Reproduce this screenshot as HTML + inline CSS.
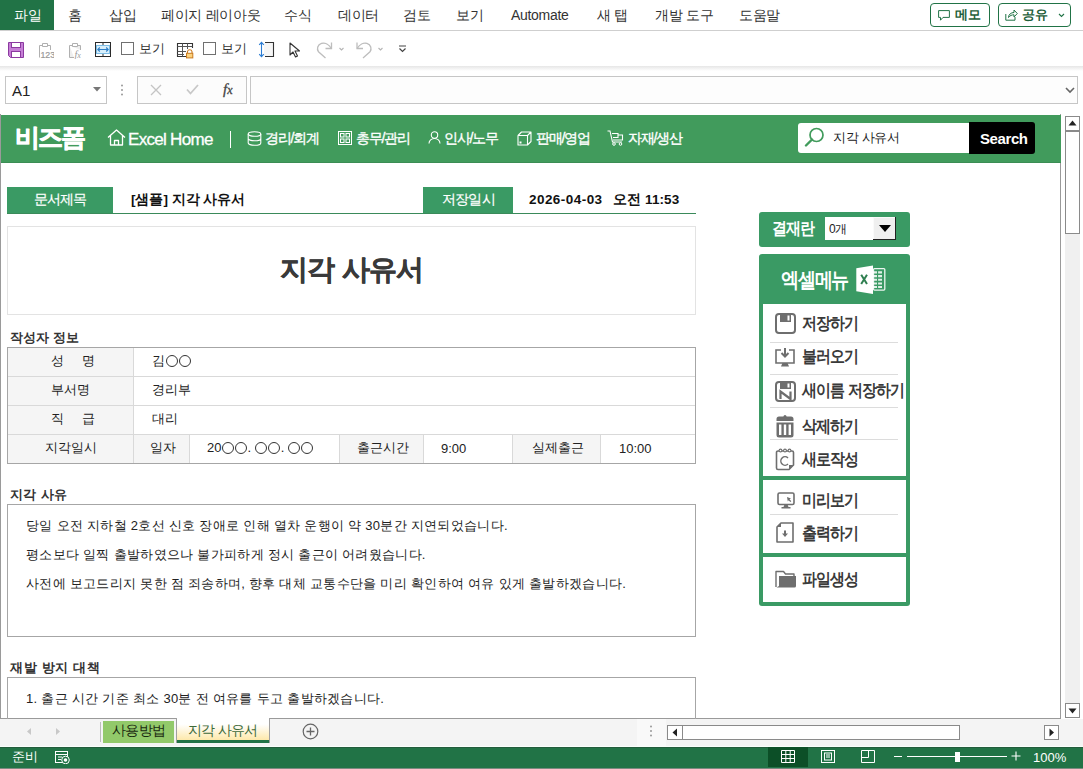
<!DOCTYPE html>
<html><head><meta charset="utf-8">
<style>
*{margin:0;padding:0;box-sizing:border-box}
html,body{width:1083px;height:769px;overflow:hidden;background:#fff;font-family:"Liberation Sans",sans-serif;color:#222}
.a{position:absolute}
.t{position:absolute;white-space:nowrap;line-height:1}
/* menu bar */
#menubar{left:0;top:0;width:1083px;height:31px;background:#fff;border-bottom:1px solid #cfcfcf;box-shadow:0 1px 1px rgba(0,0,0,0.06)}
.mi{position:absolute;top:8px;font-size:14px;color:#333;white-space:nowrap;line-height:14px;letter-spacing:-0.3px}
#filetab{left:0;top:0;width:54px;height:30px;background:#217346}
.btn{position:absolute;top:3px;height:24px;border:1px solid #217346;border-radius:4px;background:#fff}
/* toolbar */
#toolbar{left:0;top:31px;width:1083px;height:36px;background:#fff}
#shadow{left:0;top:66px;width:1083px;height:5px;background:linear-gradient(#e6e6e6,#fff)}
.cb{position:absolute;width:13px;height:13px;border:1px solid #707070;background:#fff}
/* formula */
.box{position:absolute;border:1px solid #c6c6c6;background:#fff}
/* sheet */
#sheet{left:0;top:114px;width:1061px;height:605px;border-left:1px solid #9a9a9a;border-right:1px solid #9a9a9a;border-bottom:1px solid #9a9a9a;background:#fff;overflow:hidden}
.mt{font-size:17px;font-weight:bold;color:#3a3a3a;letter-spacing:-1px;transform:scaleX(0.88);transform-origin:0 0}
.nav{font-size:14px;color:#fff;font-weight:bold;letter-spacing:-0.7px}
.bt{font-size:13px;color:#222;letter-spacing:0.3px}
.c{display:inline-block;width:12px;height:12px;border:1.2px solid #333;border-radius:50%;margin:0 0.5px;vertical-align:-2px}
</style></head><body>

<!-- MENU BAR -->
<div id="menubar" class="a"></div>
<div id="filetab" class="a"></div>
<div class="mi" style="left:14px;color:#fff">파일</div>
<div class="mi" style="left:68px">홈</div>
<div class="mi" style="left:109px">삽입</div>
<div class="mi" style="left:161px">페이지 레이아웃</div>
<div class="mi" style="left:284px">수식</div>
<div class="mi" style="left:338px">데이터</div>
<div class="mi" style="left:403px">검토</div>
<div class="mi" style="left:456px">보기</div>
<div class="mi" style="left:511px">Automate</div>
<div class="mi" style="left:597px">새 탭</div>
<div class="mi" style="left:655px">개발 도구</div>
<div class="mi" style="left:739px">도움말</div>
<div class="btn" style="left:930px;width:60px"></div>
<div class="btn" style="left:998px;width:73px"></div>
<svg class="a" style="left:938px;top:10px" width="12" height="11" viewBox="0 0 12 11"><path d="M0.6 0.6H11.4V7.4H5L2.5 10.2V7.4H0.6Z" fill="none" stroke="#217346" stroke-width="1" stroke-linejoin="round"/></svg>
<div class="t" style="left:955px;top:8px;font-size:13px;font-weight:bold;color:#1f5f3b;letter-spacing:-0.2px">메모</div>
<svg class="a" style="left:1005px;top:9px" width="13" height="12" viewBox="0 0 13 12"><path d="M0.8 5V11.2H10V8" fill="none" stroke="#217346" stroke-width="1"/><path d="M3.5 8.5C3.5 5.5 6 3.5 9 3.5V1L12.3 4.5L9 8V5.8C6.8 5.8 5 6.5 3.5 8.5Z" fill="none" stroke="#217346" stroke-width="1" stroke-linejoin="round"/></svg>
<div class="t" style="left:1022px;top:8px;font-size:13px;font-weight:bold;color:#1f5f3b;letter-spacing:-0.2px">공유</div>
<svg class="a" style="left:1058px;top:13px" width="7" height="5" viewBox="0 0 7 5"><path d="M1 1L3.5 3.5L6 1" fill="none" stroke="#217346" stroke-width="1.1"/></svg>

<!-- TOOLBAR -->
<div id="toolbar" class="a"></div>
<div id="shadow" class="a"></div>
<!-- save icon -->
<svg class="a" style="left:8px;top:42px" width="16" height="16" viewBox="0 0 16 16">
<path d="M0.5 0.5H15.5V15.5H2.5L0.5 13.5Z" fill="#c67fd6" stroke="#8b3aa0" stroke-width="1"/>
<rect x="3.5" y="0.5" width="9" height="5" fill="#fff" stroke="#8b3aa0"/>
<rect x="3.5" y="9.5" width="9" height="6" fill="#fff" stroke="#8b3aa0"/>
</svg>
<!-- paste values icon -->
<svg class="a" style="left:38px;top:42px" width="16" height="17" viewBox="0 0 16 17">
<path d="M4 3.5H1.5V15.5M10 3.5H12.5V8" fill="none" stroke="#b0b0b0" stroke-width="1"/>
<path d="M4.5 4.5V1.5H9.5V4.5Z" fill="#fff" stroke="#b0b0b0" stroke-width="1"/>
<text x="2.4" y="16.3" font-size="8.8" fill="#999" font-family="Liberation Sans" stroke="#999" stroke-width="0.2">123</text>
</svg>
<!-- paste formula icon -->
<svg class="a" style="left:68px;top:42px" width="16" height="17" viewBox="0 0 16 17">
<path d="M1.5 3.5H12.5V8M1.5 3.5V15.5H6" fill="#eee" stroke="#b0b0b0" stroke-width="1"/>
<path d="M4.5 4.5V1.5H9.5V4.5Z" fill="#fff" stroke="#b0b0b0" stroke-width="1"/>
<text x="6.5" y="16" font-size="10" font-style="italic" fill="#999" font-family="Liberation Serif">f<tspan font-size="8">x</tspan></text>
</svg>
<!-- freeze panes -->
<svg class="a" style="left:95px;top:42px" width="16" height="15" viewBox="0 0 16 15">
<rect x="0.5" y="0.5" width="15" height="14" fill="#fff" stroke="#2a2a2a"/>
<line x1="8" y1="0.5" x2="8" y2="3.5" stroke="#2a2a2a"/>
<line x1="8" y1="11.5" x2="8" y2="14.5" stroke="#2a2a2a"/>
<rect x="1.5" y="3.5" width="13" height="8" fill="#d8effb" stroke="#7cbde6"/><rect x="0.5" y="0.5" width="15" height="14" fill="none" stroke="#2a2a2a"/>
<path d="M2.8 7.5H13.2M4.8 5.5L2.8 7.5L4.8 9.5M11.2 5.5L13.2 7.5L11.2 9.5" stroke="#2f7fc8" stroke-width="1.1" fill="none"/>
</svg>
<div class="cb" style="left:121px;top:42px"></div>
<div class="t" style="left:139px;top:42px;font-size:13px;color:#333">보기</div>
<!-- table lock -->
<svg class="a" style="left:176px;top:42px" width="18" height="17" viewBox="0 0 18 17">
<path d="M12 14.5H1.5V1.5H16.5V6" fill="#fff" stroke="#333" stroke-width="1.1"/>
<path d="M1.5 4.5H16.5M1.5 9.5H10M1.5 12.5H8M6.5 1.5V14.5M11.5 1.5V7" stroke="#555" stroke-width="1" fill="none"/>
<path d="M11.5 11V9.5A2.3 2.3 0 0 1 16 9.5V11" fill="none" stroke="#c97a20" stroke-width="1.1"/>
<rect x="10.5" y="11.3" width="6.3" height="4.6" fill="#fcd27c" stroke="#c97a20" stroke-width="1"/>
</svg>
<div class="cb" style="left:203px;top:42px"></div>
<div class="t" style="left:221px;top:42px;font-size:13px;color:#333">보기</div>
<!-- row height -->
<svg class="a" style="left:258px;top:41px" width="17" height="17" viewBox="0 0 17 17">
<rect x="6" y="2" width="9" height="13" fill="#f6f6f6"/>
<path d="M7 1.5H15.5V15.5H7" fill="none" stroke="#333" stroke-width="1.1"/>
<path d="M3.5 1.5V15.5M1.2 3.8L3.5 1.3L5.8 3.8M1.2 13.2L3.5 15.7L5.8 13.2" fill="none" stroke="#2b7cd3" stroke-width="1.1"/>
</svg>
<!-- cursor -->
<svg class="a" style="left:289px;top:42px" width="12" height="16" viewBox="0 0 12 16">
<path d="M1 1V13L4 10L6.5 15L8.5 14L6 9H10.5Z" fill="#fff" stroke="#333" stroke-width="1.1" stroke-linejoin="round"/>
</svg>
<!-- redo -->
<svg class="a" style="left:316px;top:41px" width="30" height="18" viewBox="0 0 30 18">
<path d="M9.5 7.5H15.5V1.5" fill="none" stroke="#bdbdbd" stroke-width="1.3"/>
<path d="M15.3 7.3C13 3.5 9 1.3 5.5 2.3C1.5 3.5 0.5 8 2.5 10.8L9.5 17" fill="none" stroke="#bdbdbd" stroke-width="1.3"/>
<path d="M23.5 7L25.5 9L27.5 7" fill="none" stroke="#b5b5b5" stroke-width="1.1"/>
</svg>
<!-- undo -->
<svg class="a" style="left:355px;top:41px" width="30" height="18" viewBox="0 0 30 18">
<path d="M8 7.5H2V1.5" fill="none" stroke="#bdbdbd" stroke-width="1.3"/>
<path d="M2.2 7.3C4.5 3.5 8.5 1.3 12 2.3C16 3.5 17 8 15 10.8L8 17" fill="none" stroke="#bdbdbd" stroke-width="1.3"/>
<path d="M23.5 7L25.5 9L27.5 7" fill="none" stroke="#b5b5b5" stroke-width="1.1"/>
</svg>
<!-- customize -->
<svg class="a" style="left:398px;top:45px" width="9" height="8" viewBox="0 0 9 8">
<path d="M1 1H8M1.5 3.5L4.5 6.5L7.5 3.5" fill="none" stroke="#444" stroke-width="1.2"/>
</svg>

<!-- FORMULA BAR -->
<div class="box" style="left:5px;top:76px;width:102px;height:28px"></div>
<div class="t" style="left:12px;top:83px;font-size:15px;color:#222">A1</div>
<svg class="a" style="left:93px;top:87px" width="8" height="5" viewBox="0 0 8 5"><path d="M0 0H8L4 4.5Z" fill="#777"/></svg>
<svg class="a" style="left:120px;top:84px" width="4" height="12" viewBox="0 0 4 12"><circle cx="2" cy="1.5" r="1" fill="#999"/><circle cx="2" cy="6" r="1" fill="#999"/><circle cx="2" cy="10.5" r="1" fill="#999"/></svg>
<div class="box" style="left:137px;top:76px;width:110px;height:28px;background:#fcfcfc"></div>
<svg class="a" style="left:150px;top:84px" width="12" height="12" viewBox="0 0 12 12"><path d="M1 1L11 11M11 1L1 11" stroke="#c4c4c4" stroke-width="1.3"/></svg>
<svg class="a" style="left:186px;top:84px" width="13" height="11" viewBox="0 0 13 11"><path d="M1 5.5L4.5 9.5L12 1" fill="none" stroke="#c8c8c8" stroke-width="1.8"/></svg>
<div class="t" style="left:223px;top:82px;font-size:15px;font-family:'Liberation Serif',serif;font-style:italic;color:#444;-webkit-text-stroke:0.3px #444">f<span style="font-size:12px">x</span></div>
<div class="box" style="left:250px;top:76px;width:828px;height:28px;background:#fdfdfd"></div>
<svg class="a" style="left:1065px;top:87px" width="10" height="7" viewBox="0 0 10 7"><path d="M1 1L5 5L9 1" fill="none" stroke="#666" stroke-width="1.6"/></svg>

<!-- SHEET -->
<div id="sheet" class="a"></div>
<!-- header band -->
<div class="a" style="left:1px;top:115px;width:1060px;height:48px;background:#419b5c;border-bottom:1px solid #3b8d54"></div>
<div class="t" style="left:15px;top:125px;font-size:25px;font-weight:bold;color:#fff;letter-spacing:-1.8px;-webkit-text-stroke:0.7px #fff">비즈폼</div>
<svg class="a" style="left:107px;top:129px" width="19" height="17" viewBox="0 0 19 17">
<path d="M1 8.5L9.5 1L18 8.5M3.5 6.5V16H15.5V6.5M7.5 16V11.5H11.5V16" fill="none" stroke="#fff" stroke-width="1.3" stroke-linejoin="round"/>
</svg>
<div class="t" style="left:128px;top:131px;font-size:17px;color:#fff;letter-spacing:-0.7px;-webkit-text-stroke:0.3px #fff">Excel Home</div>
<div class="a" style="left:230px;top:131px;width:1px;height:17px;background:#fff"></div>
<svg class="a" style="left:247px;top:131px" width="15" height="15" viewBox="0 0 15 15">
<ellipse cx="7.5" cy="3" rx="6.3" ry="2.3" fill="none" stroke="#fff" stroke-width="1.1"/>
<path d="M1.2 3V12A6.3 2.3 0 0 0 13.8 12V3M1.2 7.5A6.3 2.3 0 0 0 13.8 7.5" fill="none" stroke="#fff" stroke-width="1.1"/>
</svg>
<div class="t" style="left:265px;top:131px;font-size:14px;color:#fff;font-weight:normal;letter-spacing:-1.2px;-webkit-text-stroke:0.35px #fff">경리/회계</div>
<svg class="a" style="left:338px;top:131px" width="14" height="14" viewBox="0 0 14 14">
<rect x="0.5" y="0.5" width="13" height="13" fill="none" stroke="#fff"/>
<rect x="2.5" y="2.5" width="3.5" height="3.5" fill="none" stroke="#fff"/><rect x="8" y="2.5" width="3.5" height="3.5" fill="none" stroke="#fff"/>
<rect x="2.5" y="8" width="3.5" height="3.5" fill="none" stroke="#fff"/><rect x="8" y="8" width="3.5" height="3.5" fill="none" stroke="#fff"/>
</svg>
<div class="t" style="left:356px;top:131px;font-size:14px;color:#fff;font-weight:normal;letter-spacing:-1.2px;-webkit-text-stroke:0.35px #fff">총무/관리</div>
<svg class="a" style="left:428px;top:131px" width="13" height="13" viewBox="0 0 13 13">
<circle cx="6.5" cy="4" r="3.2" fill="none" stroke="#fff" stroke-width="1.1"/>
<path d="M1 12.5A5.5 5 0 0 1 12 12.5" fill="none" stroke="#fff" stroke-width="1.1"/>
</svg>
<div class="t" style="left:444px;top:131px;font-size:14px;color:#fff;font-weight:normal;letter-spacing:-1.2px;-webkit-text-stroke:0.35px #fff">인사/노무</div>
<svg class="a" style="left:517px;top:131px" width="15" height="15" viewBox="0 0 15 15">
<path d="M1 4.5H10.5V14H1ZM1 4.5L4.5 1H14V10.5L10.5 14M10.5 4.5L14 1" fill="none" stroke="#fff" stroke-width="1.1" stroke-linejoin="round"/>
<rect x="2.5" y="10.5" width="2" height="2" fill="#fff"/>
</svg>
<div class="t" style="left:536px;top:131px;font-size:14px;color:#fff;font-weight:normal;letter-spacing:-1.2px;-webkit-text-stroke:0.35px #fff">판매/영업</div>
<svg class="a" style="left:607px;top:130px" width="17" height="16" viewBox="0 0 17 16">
<path d="M0.5 1H3L5.5 12H15" fill="none" stroke="#fff" stroke-width="1.1"/>
<path d="M5 3.5H11V7.5H6M11 5H15.5V10H6" fill="none" stroke="#fff" stroke-width="1.1"/>
<circle cx="7" cy="14" r="1.3" fill="none" stroke="#fff"/><circle cx="13.5" cy="14" r="1.3" fill="none" stroke="#fff"/>
</svg>
<div class="t" style="left:628px;top:131px;font-size:14px;color:#fff;font-weight:normal;letter-spacing:-1.2px;-webkit-text-stroke:0.35px #fff">자재/생산</div>
<!-- search -->
<div class="a" style="left:798px;top:123px;width:172px;height:30px;background:#fff;border-radius:3px 0 0 3px"></div>
<div class="a" style="left:969px;top:122px;width:66px;height:32px;background:#000;border-radius:0 3px 3px 0"></div>
<svg class="a" style="left:804px;top:127px" width="21" height="20" viewBox="0 0 21 20">
<circle cx="12.5" cy="8" r="6.5" fill="none" stroke="#419b5c" stroke-width="1.7"/>
<path d="M8 12.5L2 18.5" stroke="#419b5c" stroke-width="2.4" stroke-linecap="round"/>
</svg>
<div class="t" style="left:833px;top:131px;font-size:13px;color:#222;letter-spacing:-0.3px">지각 사유서</div>
<div class="t" style="left:980px;top:131px;font-size:15px;font-weight:bold;color:#fff;letter-spacing:-0.4px">Search</div>

<!-- title row -->
<div class="a" style="left:7px;top:187px;width:106px;height:26px;background:#3a9a64"></div>
<div class="t" style="left:34px;top:193px;font-size:13.5px;color:#fff;letter-spacing:-0.9px;-webkit-text-stroke:0.2px #fff">문서제목</div>
<div class="t" style="left:131px;top:193px;font-size:13.5px;font-weight:bold;color:#111">[샘플] 지각 사유서</div>
<div class="a" style="left:423px;top:187px;width:90px;height:26px;background:#3a9a64"></div>
<div class="t" style="left:442px;top:193px;font-size:13.5px;color:#fff;letter-spacing:-0.8px;-webkit-text-stroke:0.2px #fff">저장일시</div>
<div class="t" style="left:529px;top:193px;font-size:13.5px;font-weight:bold;color:#111;letter-spacing:0.45px">2026-04-03</div>
<div class="t" style="left:613px;top:193px;font-size:13.5px;font-weight:bold;color:#111;letter-spacing:0.1px">오전 11:53</div>
<div class="a" style="left:7px;top:213px;width:689px;height:1px;background:#3a8a5a"></div>

<!-- title box -->
<div class="a" style="left:7px;top:226px;width:689px;height:89px;border:1px solid #e3e3e3"></div>
<div class="t" style="left:280px;top:256px;font-size:28px;font-weight:bold;color:#3a3a3a;letter-spacing:-0.7px;-webkit-text-stroke:0.4px #3a3a3a">지각 사유서</div>

<!-- author info -->
<div class="t" style="left:10px;top:331px;font-size:13px;font-weight:bold;color:#333">작성자 정보</div>
<div class="a" style="left:7px;top:347px;width:689px;height:117px;border:1px solid #a6a6a6"></div>
<div class="a" style="left:8px;top:348px;width:126px;height:115px;background:#f5f5f5"></div>
<div class="a" style="left:134px;top:434px;width:56px;height:29px;background:#f5f5f5"></div>
<div class="a" style="left:340px;top:434px;width:84px;height:29px;background:#f5f5f5"></div>
<div class="a" style="left:512px;top:434px;width:89px;height:29px;background:#f5f5f5"></div>
<div class="a" style="left:8px;top:376px;width:687px;height:1px;background:#d9d9d9"></div>
<div class="a" style="left:8px;top:405px;width:687px;height:1px;background:#d9d9d9"></div>
<div class="a" style="left:8px;top:434px;width:687px;height:1px;background:#d9d9d9"></div>
<div class="a" style="left:133px;top:348px;width:1px;height:115px;background:#d9d9d9"></div>
<div class="a" style="left:189px;top:434px;width:1px;height:29px;background:#d9d9d9"></div>
<div class="a" style="left:339px;top:434px;width:1px;height:29px;background:#d9d9d9"></div>
<div class="a" style="left:423px;top:434px;width:1px;height:29px;background:#d9d9d9"></div>
<div class="a" style="left:512px;top:434px;width:1px;height:29px;background:#d9d9d9"></div>
<div class="a" style="left:600px;top:434px;width:1px;height:29px;background:#d9d9d9"></div>
<div class="t" style="left:51px;top:354px;font-size:13px;color:#222">성&nbsp;&nbsp;&nbsp;&nbsp;&nbsp;명</div>
<div class="t" style="left:152px;top:354px;font-size:13px;color:#222">김<i class="c"></i><i class="c"></i></div>
<div class="t" style="left:51px;top:383px;font-size:13px;color:#222">부서명</div>
<div class="t" style="left:152px;top:383px;font-size:13px;color:#222">경리부</div>
<div class="t" style="left:51px;top:412px;font-size:13px;color:#222">직&nbsp;&nbsp;&nbsp;&nbsp;&nbsp;급</div>
<div class="t" style="left:152px;top:412px;font-size:13px;color:#222">대리</div>
<div class="t" style="left:45px;top:441px;font-size:13px;color:#222">지각일시</div>
<div class="t" style="left:150px;top:441px;font-size:13px;color:#222">일자</div>
<div class="t" style="left:207px;top:441px;font-size:13px;color:#222">20<i class="c"></i><i class="c"></i>. <i class="c"></i><i class="c"></i>. <i class="c"></i><i class="c"></i></div>
<div class="t" style="left:357px;top:441px;font-size:13px;color:#222">출근시간</div>
<div class="t" style="left:441px;top:442px;font-size:13px;color:#222">9:00</div>
<div class="t" style="left:532px;top:441px;font-size:13px;color:#222">실제출근</div>
<div class="t" style="left:619px;top:442px;font-size:13px;color:#222">10:00</div>

<!-- reason -->
<div class="t" style="left:10px;top:488px;font-size:13px;font-weight:bold;color:#333;letter-spacing:0.3px">지각 사유</div>
<div class="a" style="left:7px;top:504px;width:689px;height:133px;border:1px solid #a6a6a6"></div>
<div class="t" style="left:26px;top:519px;font-size:13px;color:#222;letter-spacing:0.3px">당일 오전 지하철 2호선 신호 장애로 인해 열차 운행이 약 30분간 지연되었습니다.</div>
<div class="t" style="left:26px;top:548px;font-size:13px;color:#222;letter-spacing:0.3px">평소보다 일찍 출발하였으나 불가피하게 정시 출근이 어려웠습니다.</div>
<div class="t" style="left:26px;top:577px;font-size:13px;color:#222;letter-spacing:0.3px">사전에 보고드리지 못한 점 죄송하며, 향후 대체 교통수단을 미리 확인하여 여유 있게 출발하겠습니다.</div>

<!-- prevention -->
<div class="t" style="left:10px;top:661px;font-size:13px;font-weight:bold;color:#333;letter-spacing:0.7px">재발 방지 대책</div>
<div class="a" style="left:7px;top:677px;width:689px;height:60px;border:1px solid #a6a6a6"></div>
<div class="t" style="left:26px;top:692px;font-size:13px;color:#222;letter-spacing:0.3px">1. 출근 시간 기준 최소 30분 전 여유를 두고 출발하겠습니다.</div>

<!-- approval -->
<div class="a" style="left:759px;top:212px;width:151px;height:35px;background:#3a9a64;border-radius:3px"></div>
<div class="t" style="left:772px;top:220px;font-size:17px;font-weight:bold;color:#fff;letter-spacing:-1px;transform:scaleX(0.88);transform-origin:0 0">결재란</div>
<div class="a" style="left:825px;top:217px;width:49px;height:23px;background:#fff"></div>
<div class="a" style="left:873px;top:217px;width:23px;height:23px;background:#efefef;border-right:1px solid #222;border-bottom:1px solid #222;box-shadow:inset 1px 1px 0 #fafafa"></div>
<svg class="a" style="left:879px;top:225px" width="12" height="7" viewBox="0 0 12 7"><path d="M0 0H12L6 7Z" fill="#000"/></svg>
<div class="t" style="left:829px;top:223px;font-size:12px;color:#222;letter-spacing:-0.5px">0개</div>

<!-- excel menu -->
<div class="a" style="left:759px;top:254px;width:151px;height:352px;background:#3a9a64;border-radius:3px"></div>
<div class="t" style="left:781px;top:269px;font-size:21px;font-weight:bold;color:#fff;letter-spacing:-1.5px;transform:scaleX(0.86);transform-origin:0 0">엑셀메뉴</div>
<svg class="a" style="left:856px;top:265px" width="30" height="30" viewBox="0 0 30 30">
<rect x="17.5" y="3.6" width="11.3" height="21.5" rx="1" fill="none" stroke="#fff" stroke-width="1.3" opacity="0.9"/>
<path d="M17 6.2H21V8.5H17ZM22.1 6.2H26V8.5H22.1ZM17 10.1H21V12.2H17ZM22.1 10.1H26V12.2H22.1ZM17 13.75H21V15.8H17ZM22.1 13.75H26V15.8H22.1ZM17 17.4H21V19.5H17ZM22.1 17.4H26V19.5H22.1ZM17 21H21V22.9H17ZM22.1 21H26V22.9H22.1Z" fill="#fff" opacity="0.85"/>
<path d="M0.3 3.3L17 0.5V29L0.3 26.3Z" fill="#fff"/>
<path d="M5.2 9.8L11 19M11 9.8L5.2 19" stroke="#2f7f50" stroke-width="2"/>
</svg>
<div class="a" style="left:763px;top:304px;width:143px;height:172px;background:#fff"></div>
<div class="a" style="left:763px;top:480px;width:143px;height:73px;background:#fff"></div>
<div class="a" style="left:763px;top:557px;width:143px;height:45px;background:#fff"></div>
<div class="a" style="left:770px;top:342px;width:128px;height:1px;background:#dcdcdc"></div>
<div class="a" style="left:770px;top:374px;width:128px;height:1px;background:#dcdcdc"></div>
<div class="a" style="left:770px;top:407px;width:128px;height:1px;background:#dcdcdc"></div>
<div class="a" style="left:770px;top:439px;width:128px;height:1px;background:#dcdcdc"></div>
<div class="a" style="left:770px;top:514px;width:128px;height:1px;background:#dcdcdc"></div>
<!-- menu icons -->
<svg class="a" style="left:775px;top:313px" width="21" height="21" viewBox="0 0 21 21">
<rect x="1" y="1" width="19" height="19" rx="3" fill="#fff" stroke="#6e6e6e" stroke-width="2"/>
<rect x="5" y="1" width="11" height="8" fill="#6e6e6e"/><rect x="12.5" y="2.5" width="2" height="5" fill="#fff"/>
</svg>
<svg class="a" style="left:775px;top:348px" width="20" height="19" viewBox="0 0 20 19">
<path d="M6 2H1V15H19V2H14" fill="none" stroke="#6e6e6e" stroke-width="1.6"/>
<path d="M10 0V8M6.5 5L10 8.5L13.5 5" fill="none" stroke="#6e6e6e" stroke-width="2"/>
<path d="M7.5 15L6 18.5H14L12.5 15Z" fill="#6e6e6e"/>
</svg>
<svg class="a" style="left:775px;top:381px" width="21" height="21" viewBox="0 0 21 21">
<rect x="1" y="1" width="19" height="19" rx="3" fill="#fff" stroke="#6e6e6e" stroke-width="2"/>
<rect x="5" y="1" width="11" height="7" fill="#6e6e6e"/><rect x="12.5" y="2.5" width="2" height="4" fill="#fff"/>
<path d="M5.5 18V10.5L15.5 18V10.5" fill="none" stroke="#6e6e6e" stroke-width="2.2"/>
</svg>
<svg class="a" style="left:776px;top:415px" width="18" height="23" viewBox="0 0 18 23">
<path d="M0.5 6V4A2.5 2.5 0 0 1 3 1.5H15A2.5 2.5 0 0 1 17.5 4V6Z" fill="#6e6e6e"/>
<circle cx="9" cy="1.5" r="1.5" fill="#6e6e6e"/>
<path d="M0.5 7.5H17.5V20A2.5 2.5 0 0 1 15 22.5H3A2.5 2.5 0 0 1 0.5 20Z" fill="#6e6e6e"/>
<rect x="3" y="9.5" width="2.4" height="10.5" fill="#fff"/><rect x="7.8" y="9.5" width="2.4" height="10.5" fill="#fff"/><rect x="12.6" y="9.5" width="2.4" height="10.5" fill="#fff"/>
</svg>
<svg class="a" style="left:775px;top:448px" width="20" height="23" viewBox="0 0 20 23">
<path d="M3 3H17A1.5 1.5 0 0 1 18.5 4.5V17L14 21.5H3A1.5 1.5 0 0 1 1.5 20V4.5A1.5 1.5 0 0 1 3 3Z" fill="#fff" stroke="#6e6e6e" stroke-width="1.6"/>
<path d="M18.5 17H14V21.5Z" fill="#6e6e6e"/>
<circle cx="5.5" cy="2.5" r="1.4" fill="#fff" stroke="#6e6e6e" stroke-width="1.1"/><circle cx="10" cy="2.5" r="1.4" fill="#fff" stroke="#6e6e6e" stroke-width="1.1"/><circle cx="14.5" cy="2.5" r="1.4" fill="#fff" stroke="#6e6e6e" stroke-width="1.1"/>
<path d="M13 10A4.2 4.2 0 1 0 13 16" fill="none" stroke="#6e6e6e" stroke-width="1.5"/>
</svg>
<svg class="a" style="left:777px;top:492px" width="18" height="17" viewBox="0 0 18 17">
<rect x="1" y="1" width="16" height="11.5" rx="1.5" fill="none" stroke="#6e6e6e" stroke-width="1.6"/>
<path d="M10 5L14 6.5L12.5 7.3L14.3 9.2L13.3 10L11.6 8.2L10.8 9.6Z" fill="#6e6e6e"/>
<path d="M7.5 12.5L6.5 15H4.5V16.5H13.5V15H11.5L10.5 12.5Z" fill="#6e6e6e"/>
</svg>
<svg class="a" style="left:776px;top:522px" width="18" height="21" viewBox="0 0 18 21">
<path d="M5 1H17V20H1V5Z" fill="#fff" stroke="#6e6e6e" stroke-width="1.6" stroke-linejoin="round"/>
<path d="M5 1V5H1Z" fill="#6e6e6e"/>
<path d="M9 8.5V12" stroke="#6e6e6e" stroke-width="2"/><path d="M6 11.5H12L9 15Z" fill="#6e6e6e"/>
</svg>
<svg class="a" style="left:775px;top:570px" width="22" height="18" viewBox="0 0 22 18">
<path d="M1 17V1.5H8.5L10.5 4H19V6" fill="#fff" stroke="#6e6e6e" stroke-width="1.4" stroke-linejoin="round"/>
<path d="M4 6H21V16A1.5 1.5 0 0 1 19.5 17.5H1.5L4 16Z" fill="#6e6e6e"/>
</svg>
<div class="t mt" style="left:802px;top:315px">저장하기</div>
<div class="t mt" style="left:802px;top:348px">불러오기</div>
<div class="t mt" style="left:802px;top:382px">새이름 저장하기</div>
<div class="t mt" style="left:802px;top:418px">삭제하기</div>
<div class="t mt" style="left:802px;top:451px">새로작성</div>
<div class="t mt" style="left:802px;top:492px">미리보기</div>
<div class="t mt" style="left:802px;top:525px">출력하기</div>
<div class="t mt" style="left:802px;top:571px">파일생성</div>

<!-- vertical scrollbar -->
<div class="a" style="left:1065px;top:116px;width:15px;height:602px;background:#f0f0f0"></div>
<div class="a" style="left:1065px;top:116px;width:15px;height:15px;background:#fff;border:1px solid #8a8a8a"></div>
<svg class="a" style="left:1068px;top:120px" width="9" height="6" viewBox="0 0 9 6"><path d="M0.5 5.5L4.5 0.5L8.5 5.5Z" fill="#222"/></svg>
<div class="a" style="left:1065px;top:131px;width:15px;height:103px;background:#fff;border:1px solid #8a8a8a"></div>
<div class="a" style="left:1065px;top:703px;width:15px;height:15px;background:#fff;border:1px solid #8a8a8a"></div>
<svg class="a" style="left:1068px;top:708px" width="9" height="6" viewBox="0 0 9 6"><path d="M0.5 0.5L4.5 5.5L8.5 0.5Z" fill="#222"/></svg>

<!-- TAB BAR -->
<div class="a" style="left:0;top:719px;width:1083px;height:28px;background:#f4f4f4"></div>
<svg class="a" style="left:26px;top:727px" width="6" height="9" viewBox="0 0 6 9"><path d="M5 1L1 4.5L5 8Z" fill="#c8c8c8"/></svg>
<svg class="a" style="left:55px;top:727px" width="6" height="9" viewBox="0 0 6 9"><path d="M1 1L5 4.5L1 8Z" fill="#c8c8c8"/></svg>
<div class="a" style="left:100px;top:722px;width:1px;height:20px;background:#bdbdbd"></div>
<div class="a" style="left:103px;top:721px;width:71px;height:22px;background:#92c96a"></div>
<div class="t" style="left:112px;top:723px;font-size:14px;color:#1a2a10;letter-spacing:-0.6px">사용방법</div>
<div class="a" style="left:176px;top:718px;width:94px;height:25px;background:linear-gradient(#fff 25%,#fde49a);border-left:1px solid #a0a0a0;border-right:1px solid #a0a0a0"></div>
<div class="a" style="left:177px;top:740px;width:92px;height:3px;background:#217346"></div>
<div class="t" style="left:188px;top:723px;font-size:14px;color:#3d6a3a;letter-spacing:-0.7px">지각 사유서</div>
<svg class="a" style="left:302px;top:723px" width="17" height="17" viewBox="0 0 17 17"><circle cx="8.5" cy="8.5" r="7.3" fill="none" stroke="#666" stroke-width="1.2"/><path d="M8.5 4.5V12.5M4.5 8.5H12.5" stroke="#666" stroke-width="1.3"/></svg>
<div class="a" style="left:637px;top:719px;width:29px;height:27px;background:#f9f9f9"></div>
<svg class="a" style="left:649px;top:725px" width="4" height="12" viewBox="0 0 4 12"><circle cx="2" cy="1.5" r="1" fill="#999"/><circle cx="2" cy="6" r="1" fill="#999"/><circle cx="2" cy="10.5" r="1" fill="#999"/></svg>
<div class="a" style="left:667px;top:725px;width:16px;height:15px;background:#fff;border:1px solid #8a8a8a"></div>
<svg class="a" style="left:672px;top:728px" width="6" height="9" viewBox="0 0 6 9"><path d="M5 0.5L0.5 4.5L5 8.5Z" fill="#222"/></svg>
<div class="a" style="left:682px;top:725px;width:278px;height:15px;background:#fff;border:1px solid #8a8a8a"></div>
<div class="a" style="left:1044px;top:725px;width:15px;height:15px;background:#fff;border:1px solid #8a8a8a"></div>
<svg class="a" style="left:1049px;top:728px" width="6" height="9" viewBox="0 0 6 9"><path d="M0.5 0.5L5 4.5L0.5 8.5Z" fill="#222"/></svg>

<!-- STATUS BAR -->
<div class="a" style="left:0;top:746px;width:1083px;height:1px;background:#f9fffb"></div>
<div class="a" style="left:0;top:747px;width:1083px;height:21px;background:#217346;border-top:1px solid #235c3c"></div>
<div class="a" style="left:0;top:768px;width:1083px;height:1px;background:#7c8a80"></div>
<div class="t" style="left:12px;top:750px;font-size:13px;color:#fff">준비</div>
<svg class="a" style="left:55px;top:751px" width="15" height="13" viewBox="0 0 15 13"><rect x="0.5" y="0.5" width="12" height="11" fill="none" stroke="#fff"/><path d="M0.5 3.5H12.5M3 6H7M3 8.5H6" stroke="#fff"/><circle cx="10.5" cy="9" r="3.8" fill="#217346" stroke="#fff"/><circle cx="10.5" cy="9" r="1.8" fill="#fff"/></svg>
<div class="a" style="left:768px;top:747px;width:40px;height:20px;background:#0c4f27"></div>
<svg class="a" style="left:781px;top:750px" width="14" height="13" viewBox="0 0 14 13"><path d="M0.5 0.5H13.5V12.5H0.5ZM0.5 4.5H13.5M0.5 8.5H13.5M4.8 0.5V12.5M9.2 0.5V12.5" fill="none" stroke="#fff"/></svg>
<svg class="a" style="left:821px;top:750px" width="14" height="13" viewBox="0 0 14 13"><rect x="0.5" y="0.5" width="13" height="12" fill="none" stroke="#fff"/><rect x="3.5" y="3" width="7" height="7" fill="none" stroke="#fff"/><path d="M5 5H9M5 7H9" stroke="#fff"/></svg>
<svg class="a" style="left:861px;top:750px" width="14" height="13" viewBox="0 0 14 13"><path d="M0.5 0.5H13.5V12.5H0.5ZM0.5 7.5H7.5V0.5" fill="none" stroke="#fff"/></svg>
<div class="a" style="left:894px;top:756px;width:8px;height:1px;background:#fff"></div>
<div class="a" style="left:907px;top:756px;width:100px;height:1px;background:#fff"></div>
<div class="a" style="left:955px;top:752px;width:5px;height:10px;background:#fff"></div>
<svg class="a" style="left:1011px;top:751px" width="10" height="10" viewBox="0 0 10 10"><path d="M5 0.5V9.5M0.5 5H9.5" stroke="#fff" stroke-width="1.1"/></svg>
<div class="t" style="left:1033px;top:751px;font-size:13px;color:#fff">100%</div>

</body></html>
